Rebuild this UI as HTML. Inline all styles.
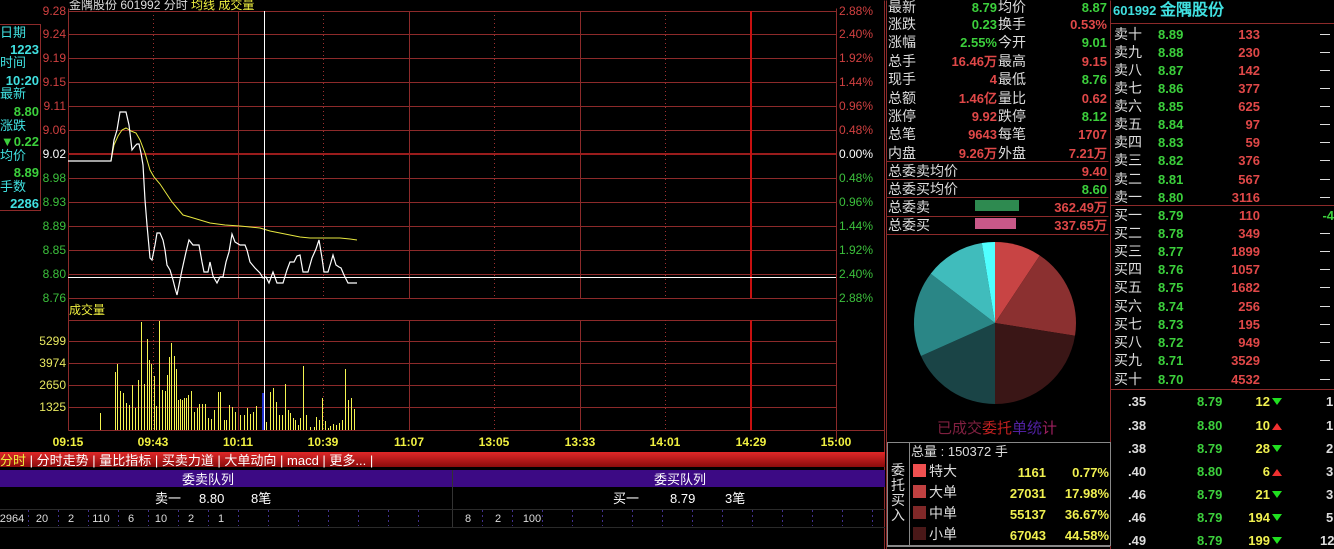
<!DOCTYPE html>
<html><head><meta charset="utf-8"><style>
html,body{margin:0;padding:0;background:#000;width:1334px;height:549px;overflow:hidden}
svg{display:block}
text{font-family:"Liberation Sans","WenQuanYi Zen Hei",sans-serif;}
.n{font-family:"Liberation Sans","WenQuanYi Zen Hei",sans-serif;font-weight:bold}
.c{shape-rendering:crispEdges}
</style></head><body>
<svg width="1334" height="549" viewBox="0 0 1334 549" xmlns="http://www.w3.org/2000/svg">
<rect width="1334" height="549" fill="#000"/>
<!-- price grid -->
<g stroke="#8c2a2a" stroke-width="1" class="c" transform="translate(0.5,0.5)">
<path d="M68 11H836M68 34H836M68 58H836M68 82H836M68 106H836M68 130H836M68 178H836M68 202H836M68 226H836M68 250H836M68 274H836M68 298H836"/>
<path d="M68 320H836M68 341H836M68 363H836M68 385H836M68 407H836M68 430H884"/>
<path d="M68 8V430M238 11V298M409 11V298M580 11V298M238 320V430M409 320V430M580 320V430M836 8V440M884 0V549"/>
</g>
<path d="M68 154H836" stroke="#9a1c1c" stroke-width="2" class="c"/>
<path d="M751 11V298M751 320V430" stroke="#c81010" stroke-width="2" class="c"/>
<g stroke="#a03030" stroke-dasharray="1,3" class="c" transform="translate(0.5,0)"><path d="M153 11V298M323 11V298M494 11V298M665 11V298M153 320V430M323 320V430M494 320V430M665 320V430"/></g>
<path d="M68 277.5H836" stroke="#fff" stroke-width="1" class="c"/>
<!-- left info box -->
<path d="M0 24.5H40.5V210.5H0" fill="none" stroke="#8c2a2a" class="c"/>
<g font-size="13" fill="#40e0e0">
<text x="0" y="37">日期</text><text x="0" y="67">时间</text><text x="0" y="98">最新</text><text x="0" y="130">涨跌</text><text x="0" y="160">均价</text><text x="0" y="191">手数</text>
</g>
<g font-size="13" text-anchor="end" class="n">
<text x="39" y="54" fill="#40e0e0">1223</text><text x="39" y="85" fill="#40e0e0">10:20</text>
<text x="39" y="116" fill="#3cd03c">8.80</text><text x="39" y="146" fill="#3cd03c">▼0.22</text>
<text x="39" y="177" fill="#3cd03c">8.89</text><text x="39" y="208" fill="#40e0e0">2286</text>
</g>
<!-- price labels -->
<g font-size="12" text-anchor="end">
<g fill="#d04040"><text x="66" y="15">9.28</text><text x="66" y="38">9.24</text><text x="66" y="62">9.19</text><text x="66" y="86">9.15</text><text x="66" y="110">9.11</text><text x="66" y="134">9.06</text></g>
<text x="66" y="158" fill="#fff">9.02</text>
<g fill="#3cc03c"><text x="66" y="182">8.98</text><text x="66" y="206">8.93</text><text x="66" y="230">8.89</text><text x="66" y="254">8.85</text><text x="66" y="278">8.80</text><text x="66" y="302">8.76</text></g>
<g fill="#e8e860"><text x="66" y="345">5299</text><text x="66" y="367">3974</text><text x="66" y="389">2650</text><text x="66" y="411">1325</text></g>
</g>
<g font-size="12">
<g fill="#d04040"><text x="839" y="15">2.88%</text><text x="839" y="38">2.40%</text><text x="839" y="62">1.92%</text><text x="839" y="86">1.44%</text><text x="839" y="110">0.96%</text><text x="839" y="134">0.48%</text></g>
<text x="839" y="158" fill="#fff">0.00%</text>
<g fill="#3cc03c"><text x="839" y="182">0.48%</text><text x="839" y="206">0.96%</text><text x="839" y="230">1.44%</text><text x="839" y="254">1.92%</text><text x="839" y="278">2.40%</text><text x="839" y="302">2.88%</text></g>
</g>
<text x="69" y="9" font-size="12" fill="#ddd">金隅股份 601992 分时 <tspan fill="#f0f040">均线 成交量</tspan></text>
<text x="69" y="314" font-size="12" fill="#f0f040">成交量</text>
<!-- avg line -->
<polyline fill="none" stroke="#e8e840" stroke-width="1" points="111,161 114,145 118,136 122,130 126,128 131,131 136,133 140,140 145,153 150,170 154,177 160,184 166,193 172,202 177,208 183,215 190,217 200,220 210,223 225,225 240,226 250,227 260,228 270,231 280,233 290,235 300,237 310,238 320,238 330,238 340,238 350,239 357,240"/>
<!-- price line -->
<polyline fill="none" stroke="#fff" stroke-width="1.2" points="68,161 111,161 114,140 117,130 120,112 126,112 129,125 132,150 135,146 137,144 139,144 141,153 143,165 145,200 147,225 150,258 152,260 155,245 157,233 160,233 163,240 165,250 167,265 170,270 173,280 175,288 177,295 179,285 182,270 186,252 189,240 193,245 199,245 202,262 204,272 208,272 210,262 213,276 217,283 220,277 223,277 226,262 229,252 232,234 235,242 240,245 245,245 247,250 250,262 255,268 260,273 263,278 266,277 269,283 273,272 277,283 283,283 287,270 290,262 294,262 297,256 300,255 303,272 308,272 312,258 316,249 319,240 322,258 324,272 328,272 331,262 333,255 336,265 339,267 341,268 344,275 348,283 357,283"/>
<!-- cursor -->
<path d="M264.5 11V430" stroke="#fff" stroke-width="1" class="c"/>
<!-- volume bars -->
<path stroke="#f4f450" stroke-width="1" fill="none" class="c" transform="translate(0.5,0)" d="M100 430V413M115 430V372M117 430V364M120 430V391M123 430V393M126 430V403M129 430V405M132 430V385M135 430V408M138 430V380M141 430V322M144 430V384M147 430V339M149 430V360M151 430V364M154 430V376M156 430V406M159 430V321M162 430V390M165 430V391M167 430V375M169 430V357M171 430V343M174 430V356M176 430V369M178 430V400M180 430V399M182 430V400M184 430V398M186 430V398M188 430V395M191 430V391M194 430V412M197 430V408M199 430V404M202 430V404M205 430V404M208 430V418M211 430V419M214 430V410M218 430V392M220 430V392M224 430V420M226 430V420M229 430V405M232 430V407M235 430V412M240 430V415M244 430V415M247 430V408M250 430V414M253 430V412M256 430V406M266 430V422M270 430V392M273 430V388M276 430V402M279 430V415M282 430V415M285 430V384M288 430V410M290 430V413M293 430V418M295 430V420M298 430V425M300 430V418M303 430V366M306 430V415M310 430V427M314 430V427M316 430V417M319 430V420M322 430V398M325 430V421M328 430V428M330 430V426M333 430V424M336 430V425M339 430V423M342 430V420M345 430V369M348 430V400M351 430V398M354 430V409"/>
<path d="M263 430V393" stroke="#2030d0" stroke-width="2" class="c"/>
<!-- time labels -->
<g font-size="12" fill="#f0f040" class="n" text-anchor="middle">
<text x="68" y="446">09:15</text><text x="153" y="446">09:43</text><text x="238" y="446">10:11</text><text x="323" y="446">10:39</text><text x="409" y="446">11:07</text><text x="494" y="446">13:05</text><text x="580" y="446">13:33</text><text x="665" y="446">14:01</text><text x="751" y="446">14:29</text><text x="836" y="446">15:00</text>
</g>
<!-- tab bar -->
<defs><linearGradient id="rg" x1="0" y1="0" x2="0" y2="1"><stop offset="0" stop-color="#e02828"/><stop offset="1" stop-color="#8a0c0c"/></linearGradient></defs>
<rect x="0" y="452" width="885" height="15" fill="url(#rg)"/>
<text x="0" y="465" font-size="13" fill="#f0f040">分时<tspan fill="#fff"> | 分时走势 | 量比指标 | 买卖力道 | 大单动向 | macd | 更多... |</tspan></text>
<rect x="0" y="470" width="885" height="17" fill="#3c0a84"/>
<path d="M452.5 470V527" stroke="#333" class="c"/>
<g font-size="13" fill="#fff" text-anchor="middle"><text x="208" y="484">委卖队列</text><text x="680" y="484">委买队列</text></g>
<g font-size="13" fill="#fff"><text x="155" y="503">卖一</text><text x="199" y="503">8.80</text><text x="251" y="503">8笔</text>
<text x="613" y="503">买一</text><text x="670" y="503">8.79</text><text x="725" y="503">3笔</text></g>
<path d="M0 509.5H885M0 527.5H885" stroke="#2a2a2a" class="c"/>
<g stroke="#40308a" stroke-dasharray="2,3" class="c" transform="translate(0.5,0)"><path d="M28 510V526M58 510V526M88 510V526M118 510V526M148 510V526M178 510V526M208 510V526M238 510V526M268 510V526M298 510V526M328 510V526M358 510V526M388 510V526M418 510V526M482 510V526M512 510V526M542 510V526M572 510V526M602 510V526M632 510V526M662 510V526M692 510V526M722 510V526M752 510V526M782 510V526M812 510V526M842 510V526M872 510V526"/></g>
<g font-size="11" fill="#ddd" text-anchor="middle"><text x="12" y="522">2964</text><text x="42" y="522">20</text><text x="71" y="522">2</text><text x="101" y="522">110</text><text x="131" y="522">6</text><text x="161" y="522">10</text><text x="191" y="522">2</text><text x="221" y="522">1</text>
<text x="468" y="522">8</text><text x="498" y="522">2</text><text x="532" y="522">100</text></g>
<!-- info panel -->
<g stroke="#8c2a2a" class="c" transform="translate(0.5,0.5)"><path d="M886 161H1108M886 179H1108M886 197H1108M886 216H1108M886 234H1108M1110 0V549M886 0V549"/></g>
<g font-size="14" fill="#ddd">
<text x="888" y="12">最新</text><text x="888" y="29">涨跌</text><text x="888" y="47">涨幅</text><text x="888" y="66">总手</text><text x="888" y="84">现手</text><text x="888" y="103">总额</text><text x="888" y="121">涨停</text><text x="888" y="139">总笔</text><text x="888" y="158">内盘</text>
<text x="998" y="12">均价</text><text x="998" y="29">换手</text><text x="998" y="47">今开</text><text x="998" y="66">最高</text><text x="998" y="84">最低</text><text x="998" y="103">量比</text><text x="998" y="121">跌停</text><text x="998" y="139">每笔</text><text x="998" y="158">外盘</text>
<text x="888" y="176">总委卖均价</text><text x="888" y="194">总委买均价</text><text x="888" y="212">总委卖</text><text x="888" y="230">总委买</text>
</g>
<g font-size="13" class="n" text-anchor="end">
<text x="997" y="12" fill="#3cd03c">8.79</text><text x="997" y="29" fill="#3cd03c">0.23</text><text x="997" y="47" fill="#3cd03c">2.55%</text><text x="997" y="66" fill="#e04848">16.46万</text><text x="997" y="84" fill="#e04848">4</text><text x="997" y="103" fill="#e04848">1.46亿</text><text x="997" y="121" fill="#e04848">9.92</text><text x="997" y="139" fill="#e04848">9643</text><text x="997" y="158" fill="#e04848">9.26万</text>
<text x="1107" y="12" fill="#3cd03c">8.87</text><text x="1107" y="29" fill="#e04848">0.53%</text><text x="1107" y="47" fill="#3cd03c">9.01</text><text x="1107" y="66" fill="#e04848">9.15</text><text x="1107" y="84" fill="#3cd03c">8.76</text><text x="1107" y="103" fill="#e04848">0.62</text><text x="1107" y="121" fill="#3cd03c">8.12</text><text x="1107" y="139" fill="#e04848">1707</text><text x="1107" y="158" fill="#e04848">7.21万</text>
<text x="1107" y="176" fill="#e04848">9.40</text><text x="1107" y="194" fill="#3cd03c">8.60</text><text x="1107" y="212" fill="#e04848">362.49万</text><text x="1107" y="230" fill="#e04848">337.65万</text>
</g>
<rect x="975" y="200" width="44" height="11" fill="#2e8a50"/>
<rect x="975" y="218" width="41" height="11" fill="#c85888"/>
<!-- pie -->
<g transform="translate(995,323)">
<path d="M0 0L0 -81A81 81 0 0 1 44.8 -67.5Z" fill="#c84444"/>
<path d="M0 0L44.8 -67.5A81 81 0 0 1 80 12.7Z" fill="#8b3030"/>
<path d="M0 0L80 12.7A81 81 0 0 1 0 81Z" fill="#3a1616"/>
<path d="M0 0L0 81A81 81 0 0 1 -74 33Z" fill="#1a4446"/>
<path d="M0 0L-74 33A81 81 0 0 1 -64.3 -49.3Z" fill="#2a8686"/>
<path d="M0 0L-64.3 -49.3A81 81 0 0 1 -13.2 -80Z" fill="#40bcbc"/>
<path d="M0 0L-13.2 -80A81 81 0 0 1 0 -81Z" fill="#50ffff"/>
</g>
<text x="997" y="433" font-size="15" text-anchor="middle"><tspan fill="#802040">已成交</tspan><tspan fill="#c02020">委托</tspan><tspan fill="#5020a0">单统</tspan><tspan fill="#a02060">计</tspan></text>
<!-- order stats box -->
<rect x="887.5" y="442.5" width="223" height="103" fill="none" stroke="#888" class="c"/>
<path d="M909.5 443V545M887 546.5H1110" stroke="#888" class="c"/>
<text x="898" y="475" font-size="14" fill="#ddd" text-anchor="middle"><tspan x="898" dy="0">委</tspan><tspan x="898" dy="15">托</tspan><tspan x="898" dy="15">买</tspan><tspan x="898" dy="15">入</tspan></text>
<text x="911" y="456" font-size="13" fill="#ddd">总量 :    150372 手</text>
<rect x="913" y="464" width="13" height="13" fill="#f05050"/><rect x="913" y="485" width="13" height="13" fill="#c04040"/><rect x="913" y="506" width="13" height="13" fill="#802828"/><rect x="913" y="527" width="13" height="13" fill="#4a1818"/>
<g font-size="14" fill="#ddd"><text x="929" y="476">特大</text><text x="929" y="497">大单</text><text x="929" y="518">中单</text><text x="929" y="539">小单</text></g>
<g font-size="13" class="n" fill="#f0f050" text-anchor="end">
<text x="1046" y="477">1161</text><text x="1046" y="498">27031</text><text x="1046" y="519">55137</text><text x="1046" y="540">67043</text>
<text x="1109" y="477">0.77%</text><text x="1109" y="498">17.98%</text><text x="1109" y="519">36.67%</text><text x="1109" y="540">44.58%</text>
</g>
<!-- order book -->
<text x="1113" y="15" font-size="13" fill="#40e0e0" class="n">601992 <tspan font-size="16">金隅股份</tspan></text>
<g stroke="#8c2a2a" class="c" transform="translate(0,0.5)"><path d="M1110 23H1334M1110 205H1334M1110 389H1334"/></g>
<g font-size="14" fill="#ddd">
<text x="1114" y="39">卖十</text><text x="1114" y="57">卖九</text><text x="1114" y="75">卖八</text><text x="1114" y="93">卖七</text><text x="1114" y="111">卖六</text><text x="1114" y="129">卖五</text><text x="1114" y="147">卖四</text><text x="1114" y="165">卖三</text><text x="1114" y="184">卖二</text><text x="1114" y="202">卖一</text>
<text x="1114" y="220">买一</text><text x="1114" y="238">买二</text><text x="1114" y="256">买三</text><text x="1114" y="274">买四</text><text x="1114" y="292">买五</text><text x="1114" y="311">买六</text><text x="1114" y="329">买七</text><text x="1114" y="347">买八</text><text x="1114" y="365">买九</text><text x="1114" y="384">买十</text>
</g>
<g font-size="13" class="n" fill="#3cd03c">
<text x="1158" y="39">8.89</text><text x="1158" y="57">8.88</text><text x="1158" y="75">8.87</text><text x="1158" y="93">8.86</text><text x="1158" y="111">8.85</text><text x="1158" y="129">8.84</text><text x="1158" y="147">8.83</text><text x="1158" y="165">8.82</text><text x="1158" y="184">8.81</text><text x="1158" y="202">8.80</text>
<text x="1158" y="220">8.79</text><text x="1158" y="238">8.78</text><text x="1158" y="256">8.77</text><text x="1158" y="274">8.76</text><text x="1158" y="292">8.75</text><text x="1158" y="311">8.74</text><text x="1158" y="329">8.73</text><text x="1158" y="347">8.72</text><text x="1158" y="365">8.71</text><text x="1158" y="384">8.70</text>
</g>
<g font-size="13" class="n" fill="#e04848" text-anchor="end">
<text x="1260" y="39">133</text><text x="1260" y="57">230</text><text x="1260" y="75">142</text><text x="1260" y="93">377</text><text x="1260" y="111">625</text><text x="1260" y="129">97</text><text x="1260" y="147">59</text><text x="1260" y="165">376</text><text x="1260" y="184">567</text><text x="1260" y="202">3116</text>
<text x="1260" y="220">110</text><text x="1260" y="238">349</text><text x="1260" y="256">1899</text><text x="1260" y="274">1057</text><text x="1260" y="292">1682</text><text x="1260" y="311">256</text><text x="1260" y="329">195</text><text x="1260" y="347">949</text><text x="1260" y="365">3529</text><text x="1260" y="384">4532</text>
</g>
<g stroke="#ddd" class="c" transform="translate(0,0.5)"><path d="M1320 34H1330M1320 52H1330M1320 70H1330M1320 88H1330M1320 106H1330M1320 124H1330M1320 142H1330M1320 160H1330M1320 179H1330M1320 197H1330M1320 233H1330M1320 251H1330M1320 269H1330M1320 287H1330M1320 306H1330M1320 324H1330M1320 342H1330M1320 360H1330M1320 379H1330"/></g>
<text x="1334" y="220" font-size="13" class="n" fill="#3cd03c" text-anchor="end">-4</text>
<!-- ticks -->
<g font-size="13" fill="#ddd" class="n"><text x="1128" y="406">.35</text><text x="1128" y="430">.38</text><text x="1128" y="453">.38</text><text x="1128" y="476">.40</text><text x="1128" y="499">.46</text><text x="1128" y="522">.46</text><text x="1128" y="545">.49</text></g>
<g font-size="13" fill="#3cd03c" class="n"><text x="1197" y="406">8.79</text><text x="1197" y="430">8.80</text><text x="1197" y="453">8.79</text><text x="1197" y="476">8.80</text><text x="1197" y="499">8.79</text><text x="1197" y="522">8.79</text><text x="1197" y="545">8.79</text></g>
<g font-size="13" fill="#f0f050" class="n" text-anchor="end"><text x="1270" y="406">12</text><text x="1270" y="430">10</text><text x="1270" y="453">28</text><text x="1270" y="476">6</text><text x="1270" y="499">21</text><text x="1270" y="522">194</text><text x="1270" y="545">199</text></g>
<g fill="#20e020"><path d="M1272 398h10l-5 7z M1272 445h10l-5 7z M1272 491h10l-5 7z M1272 514h10l-5 7z M1272 537h10l-5 7z"/></g>
<g fill="#f03030"><path d="M1272 430h10l-5-7z M1272 476h10l-5-7z"/></g>
<g font-size="13" fill="#ddd" class="n"><text x="1326" y="406">1</text><text x="1326" y="430">1</text><text x="1326" y="453">2</text><text x="1326" y="476">3</text><text x="1326" y="499">3</text><text x="1326" y="522">5</text><text x="1320" y="545">12</text></g>
</svg>
</body></html>
